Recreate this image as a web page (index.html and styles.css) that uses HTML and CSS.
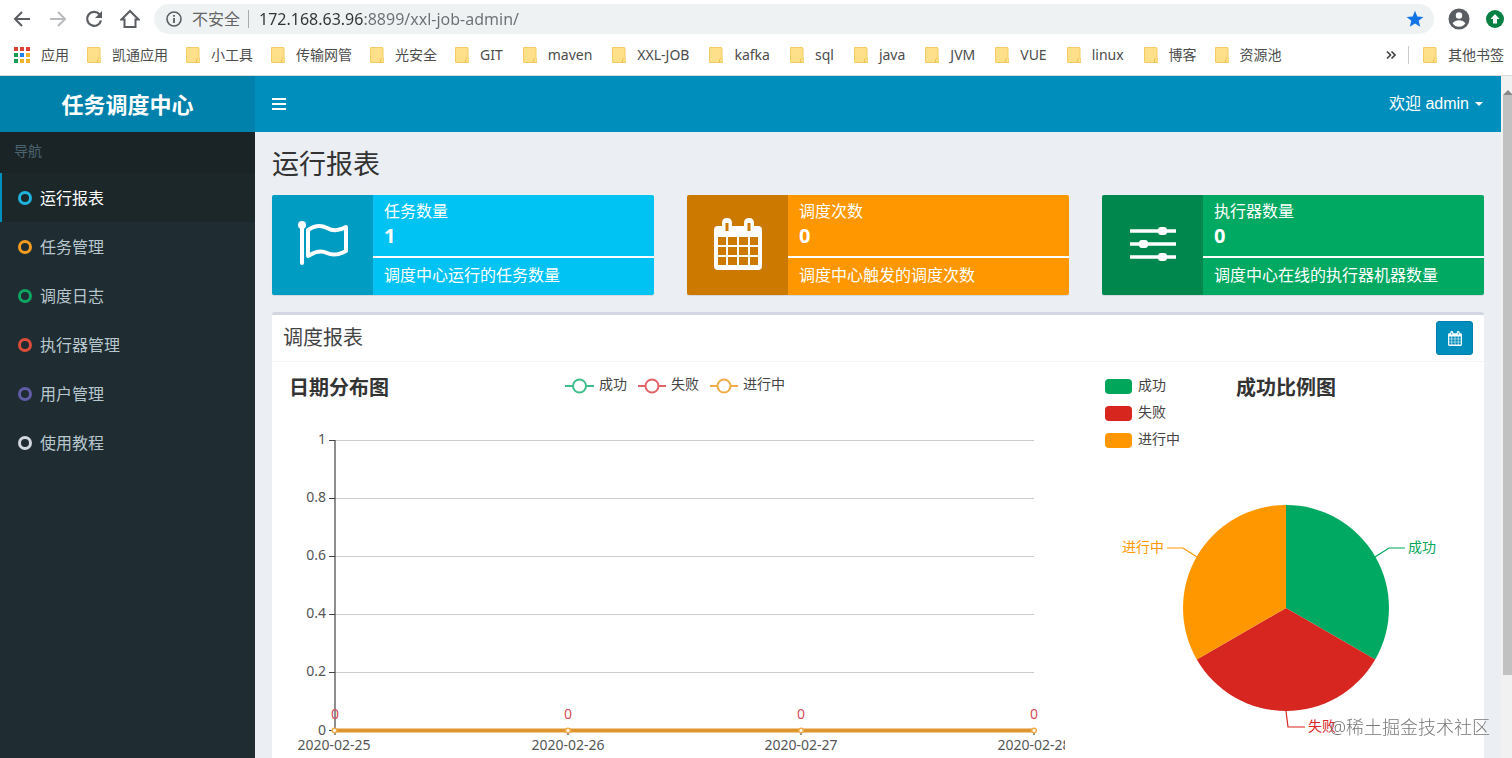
FILE: index.html
```html
<!DOCTYPE html>
<html lang="zh-CN">
<head>
    <meta charset="UTF-8">
    <meta name="viewport" content="width=device-width, initial-scale=1.0">
    <title>任务调度中心</title>
    <link rel="stylesheet" href="styles.css">
</head>
<body>
    <!-- Shared shapes -->
    <svg class="defs" width="0" height="0" aria-hidden="true">
        <symbol id="folder" viewBox="0 0 14 16">
            <path d="M0.500 0.500h11.500q1 0 1 1v9.500l1 1.500v3h-13q-.5 0-.5-.5z" fill="#ffe08a" stroke="#f2cb62"/>
            <path d="M10.500 15.500v-3l1.500-1.500" fill="none" stroke="#efc04e"/>
        </symbol>
        <symbol id="calendar" viewBox="0 0 48 52">
            <path fill="currentColor" fill-rule="evenodd" d="M4 8h4V5q0-5 5-5t5 5v3h12V5q0-5 5-5t5 5v3h4q4 0 4 4v36q0 4-4 4H4q-4 0-4-4V12q0-4 4-4zM11.500 5v8h3V5zM33.500 5v8h3V5zM4 19v8h8v-8zM14 19v8h9v-8zM25 19v8h9v-8zM36 19v8h8v-8zM4 29v8h8v-8zM14 29v8h9v-8zM25 29v8h9v-8zM36 29v8h8v-8zM4 39v8h8v-8zM14 39v8h9v-8zM25 39v8h9v-8zM36 39v8h8v-8z"/>
        </symbol>
    </svg>

    <!-- Browser toolbar -->
    <div class="toolbar">
        <button class="tool" type="button" aria-label="后退"><svg width="20" height="20" viewBox="0 0 20 20"><path d="M18 10H3M10 3l-7 7 7 7" fill="none" stroke="#5a5d61" stroke-width="2"/></svg></button>
        <button class="tool" type="button" aria-label="前进"><svg width="20" height="20" viewBox="0 0 20 20"><path d="M2 10h15M10 3l7 7-7 7" fill="none" stroke="#b9bbbe" stroke-width="2"/></svg></button>
        <button class="tool" type="button" aria-label="刷新"><svg width="20" height="20" viewBox="0 0 20 20"><path d="M15.500 5.200A7 7 0 1 0 17 11.500" fill="none" stroke="#5a5d61" stroke-width="2.200"/><path d="M18 2v7h-7z" fill="#5a5d61"/></svg></button>
        <button class="tool" type="button" aria-label="主页"><svg width="20" height="20" viewBox="0 0 20 20"><path d="M1.500 10.500L10 2l8.500 8.500H15.500V18H4.500v-7.500z" fill="none" stroke="#5a5d61" stroke-width="2"/></svg></button>
        <div class="address">
            <svg width="16" height="16" viewBox="0 0 16 16"><circle cx="8" cy="8" r="7" fill="none" stroke="#5a5d61" stroke-width="1.600"/><path d="M8 7v5M8 4v1.800" stroke="#5a5d61" stroke-width="1.800"/></svg>
            <label class="insecure" for="url">不安全</label>
            <input class="url" id="url" type="text" value="172.168.63.96:8899/xxl-job-admin/">
            <svg width="18" height="18" viewBox="0 0 18 18"><path d="M9 .8l2.300 5.700 6.100.4-4.700 3.900 1.500 6L9 13.500l-5.200 3.300 1.500-6L.6 6.900l6.100-.4z" fill="#1273e6"/></svg>
        </div>
        <button class="tool" type="button" aria-label="用户"><svg width="22" height="22" viewBox="0 0 22 22"><circle cx="11" cy="11" r="10.500" fill="#5a5d61"/><circle cx="11" cy="7.500" r="3.200" fill="#fff"/><path d="M4.500 15.300Q7 12.200 11 12.200t6.500 3.100Q15 18.800 11 18.800t-6.500-3.500z" fill="#fff"/></svg></button>
        <button class="tool" type="button" aria-label="更新"><svg width="18" height="18" viewBox="0 0 18 18"><circle cx="9" cy="9" r="9" fill="#078043"/><path d="M9 4l4.500 5H11v4.500H7V9H4.500z" fill="#fff"/></svg></button>
    </div>

    <!-- Bookmarks -->
    <nav class="bookmarks">
        <a class="bookmark apps" href="#"><svg width="16" height="16" viewBox="0 0 16 16"><path d="M0 0h4v4H0zM6 0h4v4H6zM12 0h4v4h-4z" fill="#dc4335"/><path d="M0 6h4v4H0zM0 12h4v4H0z" fill="#1a9c54"/><path d="M6 6h4v4H6z" fill="#1c84e8"/><path d="M12 6h4v4h-4zM6 12h4v4H6zM12 12h4v4h-4z" fill="#f1b52b"/></svg>应用</a>
        <a class="bookmark" href="#"><svg class="folder"><use href="#folder"/></svg>凯通应用</a>
        <a class="bookmark" href="#"><svg class="folder"><use href="#folder"/></svg>小工具</a>
        <a class="bookmark" href="#"><svg class="folder"><use href="#folder"/></svg>传输网管</a>
        <a class="bookmark" href="#"><svg class="folder"><use href="#folder"/></svg>光安全</a>
        <a class="bookmark latin" href="#"><svg class="folder"><use href="#folder"/></svg>GIT</a>
        <a class="bookmark latin" href="#"><svg class="folder"><use href="#folder"/></svg>maven</a>
        <a class="bookmark latin" href="#"><svg class="folder"><use href="#folder"/></svg>XXL-JOB</a>
        <a class="bookmark latin" href="#"><svg class="folder"><use href="#folder"/></svg>kafka</a>
        <a class="bookmark latin" href="#"><svg class="folder"><use href="#folder"/></svg>sql</a>
        <a class="bookmark latin" href="#"><svg class="folder"><use href="#folder"/></svg>java</a>
        <a class="bookmark latin" href="#"><svg class="folder"><use href="#folder"/></svg>JVM</a>
        <a class="bookmark latin" href="#"><svg class="folder"><use href="#folder"/></svg>VUE</a>
        <a class="bookmark latin" href="#"><svg class="folder"><use href="#folder"/></svg>linux</a>
        <a class="bookmark" href="#"><svg class="folder"><use href="#folder"/></svg>博客</a>
        <a class="bookmark" href="#"><svg class="folder"><use href="#folder"/></svg>资源池</a>
        <button class="more" type="button" aria-label="更多书签"><svg width="10" height="8" viewBox="0 0 10 8"><path d="M1 .5L4.500 4 1 7.500M5.500.5L9 4 5.500 7.500" fill="none" stroke="#444" stroke-width="1.600"/></svg></button>
        <a class="bookmark other" href="#"><svg class="folder"><use href="#folder"/></svg>其他书签</a>
    </nav>

    <div class="viewport">
        <div class="app">
            <!-- Sidebar -->
            <aside class="sidebar">
                <a class="logo" href="#">任务调度中心</a>
                <div class="nav-header">导航</div>
                <ul class="menu">
                    <li><a class="active" href="#"><i class="ring aqua"></i>运行报表</a></li>
                    <li><a href="#"><i class="ring yellow"></i>任务管理</a></li>
                    <li><a href="#"><i class="ring green"></i>调度日志</a></li>
                    <li><a href="#"><i class="ring red"></i>执行器管理</a></li>
                    <li><a href="#"><i class="ring purple"></i>用户管理</a></li>
                    <li><a href="#"><i class="ring gray"></i>使用教程</a></li>
                </ul>
            </aside>

            <div class="main">
                <header class="navbar">
                    <button class="toggle" type="button" aria-label="切换导航"><svg width="14" height="12" viewBox="0 0 14 12"><path d="M0 1h14M0 6h14M0 11h14" stroke="#fff" stroke-width="2"/></svg></button>
                    <button class="user" type="button">欢迎 admin<span class="caret"></span></button>
                </header>

                <section class="content">
                    <h1>运行报表</h1>

                    <div class="info-row">
                        <div class="info-box bg-aqua">
                            <span class="info-icon"><svg width="50" height="46" viewBox="0 0 50 46"><circle cx="4" cy="4" r="4" fill="#fff"/><path d="M4 4v38" stroke="#fff" stroke-width="4" stroke-linecap="round"/><path d="M10 9Q20 2 29 7t19-1v24q-11 6-19 2t-19 3z" fill="none" stroke="#fff" stroke-width="4" stroke-linejoin="round"/></svg></span>
                            <div class="info-content">
                                <span class="info-text">任务数量</span>
                                <span class="info-number">1</span>
                                <div class="progress"></div>
                                <span class="info-desc">调度中心运行的任务数量</span>
                            </div>
                        </div>
                        <div class="info-box bg-yellow">
                            <span class="info-icon"><svg width="48" height="52"><use href="#calendar"/></svg></span>
                            <div class="info-content">
                                <span class="info-text">调度次数</span>
                                <span class="info-number">0</span>
                                <div class="progress"></div>
                                <span class="info-desc">调度中心触发的调度次数</span>
                            </div>
                        </div>
                        <div class="info-box bg-green">
                            <span class="info-icon"><svg width="46" height="36" viewBox="0 0 46 36"><path d="M0 5h46M0 18h46M0 31h46" stroke="#fff" stroke-width="3.500"/><g fill="#fff"><rect x="28" y="1" width="9" height="8" rx="3"/><rect x="9" y="14" width="9" height="8" rx="3"/><rect x="28" y="27" width="9" height="8" rx="3"/></g></svg></span>
                            <div class="info-content">
                                <span class="info-text">执行器数量</span>
                                <span class="info-number">0</span>
                                <div class="progress"></div>
                                <span class="info-desc">调度中心在线的执行器机器数量</span>
                            </div>
                        </div>
                    </div>

                    <!-- Report -->
                    <div class="box">
                        <div class="box-header">
                            <h2>调度报表</h2>
                            <button class="date-btn" type="button" aria-label="选择日期"><svg width="14" height="15"><use href="#calendar"/></svg></button>
                        </div>
                        <div class="box-body">
                            <div class="col-8">
                                <svg class="chart" viewBox="0 0 782 448">
                                    <text class="chart-title" x="6" y="22">日期分布图</text>
                                    <g fill="#fff" stroke-width="2">
                                        <g stroke="#3fbd8b"><path d="M282 13h29"/><circle cx="296.500" cy="13" r="6.500"/></g>
                                        <g stroke="#de6468"><path d="M355 13h28"/><circle cx="369" cy="13" r="6.500"/></g>
                                        <g stroke="#f1ab48"><path d="M427 13h28"/><circle cx="441" cy="13" r="6.500"/></g>
                                    </g>
                                    <text x="316" y="16">成功</text>
                                    <text x="388" y="16">失败</text>
                                    <text x="460" y="16">进行中</text>

                                    <path d="M52 67.500h699M52 125.500h699M52 183.500h699M52 241.500h699M52 299.500h699" stroke="#ccc"/>
                                    <path d="M52 67v295M46 67.500h6M46 125.500h6M46 183.500h6M46 241.500h6M46 299.500h6M46 357.500h6M285 357v5M518 357v5M751 357v5" stroke="#444" stroke-width="1.200"/>
                                    <g class="axis-y">
                                        <text x="43" y="71">1</text>
                                        <text x="43" y="129">0.8</text>
                                        <text x="43" y="187">0.6</text>
                                        <text x="43" y="245">0.4</text>
                                        <text x="43" y="303">0.2</text>
                                        <text x="43" y="362">0</text>
                                    </g>
                                    <g class="axis-x">
                                        <text x="51" y="377">2020-02-25</text>
                                        <text x="285" y="377">2020-02-26</text>
                                        <text x="518" y="377">2020-02-27</text>
                                        <text x="751" y="377">2020-02-28</text>
                                    </g>
                                    <path d="M52 357.500h699" stroke="#e0962f" stroke-width="4"/>
                                    <g fill="#fff" stroke="#f0ac4c" stroke-width="1.500">
                                        <circle cx="51.500" cy="357.500" r="2.300"/>
                                        <circle cx="285" cy="357.500" r="2.300"/>
                                        <circle cx="518" cy="357.500" r="2.300"/>
                                        <circle cx="751" cy="357.500" r="2.300"/>
                                    </g>
                                    <g class="point-label">
                                        <text x="52" y="346">0</text>
                                        <text x="285" y="346">0</text>
                                        <text x="518" y="346">0</text>
                                        <text x="751" y="346">0</text>
                                    </g>
                                </svg>
                            </div>
                            <div class="col-4">
                                <svg class="chart" viewBox="0 0 374 448">
                                    <rect x="6" y="6" width="27" height="15" rx="4" fill="#00a65a"/>
                                    <rect x="6" y="33" width="27" height="15" rx="4" fill="#d7261e"/>
                                    <rect x="6" y="60" width="27" height="15" rx="4" fill="#ff9800"/>
                                    <text x="39" y="17">成功</text>
                                    <text x="39" y="44">失败</text>
                                    <text x="39" y="71">进行中</text>
                                    <text class="chart-title" x="137" y="22">成功比例图</text>

                                    <path d="M187 235V132A103 103 0 0 1 276.200 286.500z" fill="#00a962"/>
                                    <path d="M187 235L276.200 286.500A103 103 0 0 1 97.800 286.500z" fill="#d72620"/>
                                    <path d="M187 235L97.800 286.500A103 103 0 0 1 187 132z" fill="#ff9800"/>
                                    <g fill="none" stroke-width="1.200">
                                        <path d="M276 184l14-9h16" stroke="#00a65a"/>
                                        <path d="M187 338l2 16h17" stroke="#d7261e"/>
                                        <path d="M98 184l-14-9H68" stroke="#ff9800"/>
                                    </g>
                                    <text class="c-green" x="309" y="179">成功</text>
                                    <text class="c-red" x="209" y="358">失败</text>
                                    <text class="c-yellow" x="23" y="179">进行中</text>
                                </svg>
                            </div>
                        </div>
                    </div>
                </section>
            </div>
        </div>
        <div class="scrollbar"><span class="scroll-up"></span><div class="thumb"></div></div>
    </div>
    <div class="watermark">@稀土掘金技术社区</div>
</body>
</html>
```

FILE: styles.css
```css
* {
    box-sizing: border-box;
}
body {
    margin: 0;
    height: 100vh;
    display: flex;
    flex-direction: column;
    overflow: hidden;
    background: #fff;
    color: #333;
    font-family: "Noto Sans", "Noto Sans CJK SC", sans-serif;
    font-size: 16px;
    line-height: 22px;
}
a {
    color: inherit;
    text-decoration: none;
}
button {
    padding: 0;
    border: none;
    background: none;
    color: inherit;
    font: inherit;
    cursor: pointer;
}
svg {
    display: block;
    flex: none;
}
.defs {
    position: absolute;
}

/* Browser toolbar */
.toolbar {
    display: flex;
    align-items: center;
    gap: 16px;
    height: 38px;
    flex: none;
    padding: 0 8px 0 12px;
}
.address {
    display: flex;
    align-items: center;
    flex: 1;
    gap: 10px;
    height: 30px;
    margin: 0 -2px;
    padding: 0 10px 0 12px;
    border-radius: 15px;
    background: #eef2f3;
}
.insecure {
    padding-right: 8px;
    border-right: 1px solid #aaa;
    color: #666;
    line-height: 18px;
}
.url {
    flex: 1;
    min-width: 0;
    padding: 0;
    border: none;
    outline: none;
    /* host part is darker than the path */
    background: linear-gradient(to right, #333 104px, #6c6f73 104px);
    -webkit-background-clip: text;
    background-clip: text;
    color: transparent;
    font: inherit;
}

/* Bookmarks */
.bookmarks {
    display: flex;
    align-items: center;
    gap: 18px;
    height: 38px;
    flex: none;
    padding: 0 8px 3px 14px;
    border-bottom: 1px solid #d5dcdf;
    color: #4c4c4c;
    font-size: 14px;
    white-space: nowrap;
}
.bookmark {
    display: flex;
    align-items: center;
    gap: 11px;
}
.latin {
    padding-right: 2px;
}
.folder {
    width: 14px;
    height: 16px;
}
.more {
    margin-left: auto;
}
.other {
    margin-left: -6px;
    padding-left: 14px;
    border-left: 1px solid #ccc;
    line-height: 18px;
}

/* Page area */
.viewport {
    display: flex;
    flex: 1;
    min-height: 0;
}
.app {
    display: flex;
    flex: 1;
    min-width: 0;
    overflow: hidden;
    background: #ebeff3;
}
.scrollbar {
    width: 11px;
    padding-left: 2px;
    background: #f1f1f1;
    overflow: hidden;
}
.scroll-up {
    display: block;
    width: 10px;
    height: 19px;
    border: 5px solid transparent;
    border-top-width: 6px;
    border-bottom: 5px solid #888;
}
.thumb {
    height: 85%;
    background: #c1c1c1;
}

/* Sidebar */
.sidebar {
    width: 255px;
    flex: none;
    background: #1f2c31;
    color: #b8c7ce;
}
.logo {
    display: block;
    background: #0081ab;
    color: #fff;
    font-size: 22px;
    font-weight: bold;
    line-height: 56px;
    text-align: center;
}
.nav-header {
    padding: 0 14px 4px;
    background: #1a2326;
    color: #4b646f;
    font-size: 14px;
    line-height: 37px;
}
.menu {
    margin: 0;
    padding: 0;
    list-style: none;
}
.menu a {
    display: flex;
    align-items: center;
    gap: 8px;
    height: 49px;
    padding-left: 16px;
    border-left: 2px solid transparent;
}
.menu a.active {
    border-left-color: #0090c0;
    background: #1c2729;
    color: #fff;
}
.ring {
    width: 14px;
    height: 14px;
    border: 3px solid;
    border-radius: 50%;
}
.aqua { color: #1fb4de; }
.yellow { color: #f39c1f; }
.green { color: #0ea562; }
.red { color: #dd4b39; }
.purple { color: #605ca8; }
.gray { color: #d2d6de; }

/* Navbar */
.main {
    flex: 1;
    min-width: 0;
}
.navbar {
    display: flex;
    align-items: center;
    justify-content: space-between;
    height: 56px;
    padding: 0 18px 0 17px;
    background: #008ebd;
    color: #fff;
}
.user {
    display: flex;
    align-items: center;
    font-family: "Liberation Sans", "Noto Sans CJK SC", sans-serif;
}
.caret {
    margin-left: 6px;
    border: 4px solid transparent;
    border-top-color: #fff;
    border-bottom: 0;
}

/* Content */
.content {
    padding: 17px;
}
h1 {
    margin: 0 0 16px;
    font-size: 27px;
    font-weight: normal;
    line-height: 30px;
}
.info-row {
    display: grid;
    grid-template-columns: repeat(3, 1fr);
    gap: 33px;
}
.info-box {
    display: flex;
    min-height: 100px;
    border-radius: 2px;
    box-shadow: 0 1px 1px rgba(0, 0, 0, 0.1);
    color: #fff;
    overflow: hidden;
}
.bg-aqua { background: #00c3f3; }
.bg-yellow { background: #ff9800; }
.bg-green { background: #00a962; }
.info-icon {
    display: flex;
    align-items: center;
    justify-content: center;
    width: 101px;
    flex: none;
    padding-bottom: 3px;
    background: rgba(0, 0, 0, 0.2);
}
.info-content {
    flex: 1;
    padding: 5px 0;
}
.info-content span {
    display: block;
    padding: 0 11px;
}
.info-number {
    font-size: 20px;
    font-weight: bold;
    line-height: 27px;
}
.progress {
    height: 2px;
    margin: 7px 0 6px;
    background: #fff;
}

.box {
    margin-top: 17px;
    border-top: 3px solid #d2d6e0;
    border-radius: 3px;
    background: #fff;
}
.box-header {
    display: flex;
    align-items: center;
    justify-content: space-between;
    height: 47px;
    padding: 0 11px;
    border-bottom: 1px solid #f4f4f4;
}
.box-header h2 {
    margin: 0;
    color: #444;
    font-size: 20px;
    font-weight: normal;
}
.date-btn {
    display: flex;
    align-items: center;
    justify-content: center;
    width: 37px;
    height: 34px;
    border: 1px solid #007fae;
    border-radius: 3px;
    background: #008ebd;
    color: #fff;
}
.box-body {
    display: flex;
    margin: 0 -6px;
    padding: 11px 0;
}
.col-8,
.col-4 {
    padding: 0 17px;
}
.col-8 {
    width: 66.6667%;
}
.col-4 {
    width: 33.3333%;
}

/* Charts */
.chart {
    width: 100%;
    overflow: hidden;
    fill: #444;
    font-size: 14px;
}
.chart-title {
    fill: #333;
    font-size: 20px;
    font-weight: bold;
}
.axis-y {
    text-anchor: end;
}
.axis-x,
.point-label {
    text-anchor: middle;
}
.axis-x,
.axis-y {
    fill: #555;
}
.point-label {
    fill: #d64c5a;
}
.c-green { fill: #00a65a; }
.c-red { fill: #d7261e; }
.c-yellow { fill: #ff9800; }

.watermark {
    position: fixed;
    right: 22px;
    bottom: 20px;
    color: #777;
    font-size: 18px;
    font-weight: 300;
}
```
